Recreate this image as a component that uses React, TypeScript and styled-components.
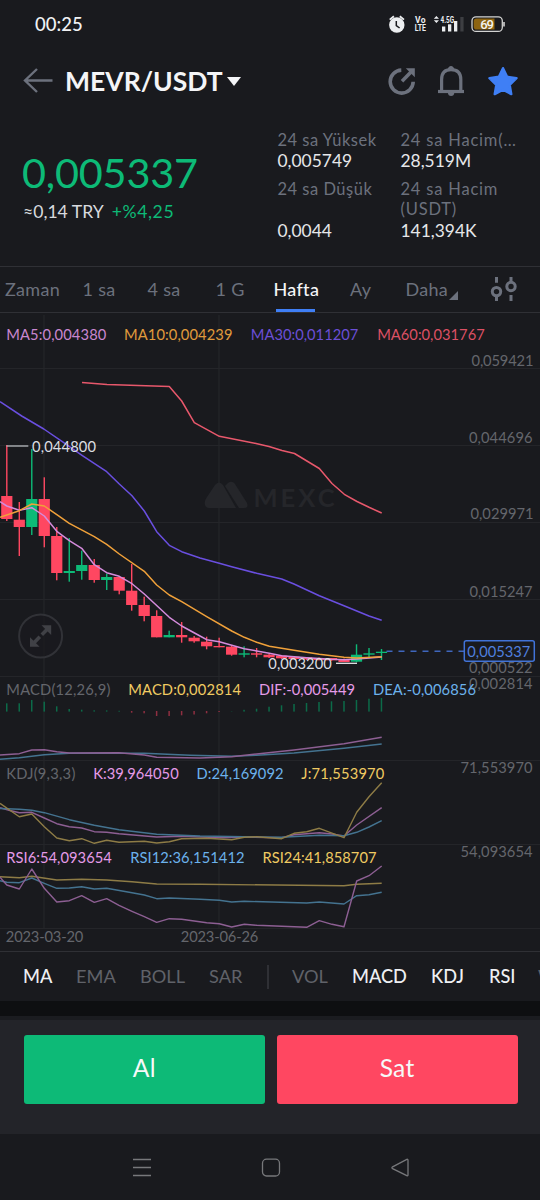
import React from 'react';
import styled, { createGlobalStyle } from 'styled-components';

const color = {
  bg: '#191a1e',
  panel: '#232429',
  line: '#2f3035',
  grid: '#242529',
  muted: '#6c717d',
  dim: '#63656b',
  text: '#e6e7ea',
  green: '#0dba77',
  red: '#ff4761',
  blue: '#3f7ff5',
};

const GlobalStyle = createGlobalStyle`
  * { box-sizing: border-box; }
  body {
    margin: 0;
    background: ${color.bg};
    font-family: Lato, "Open Sans", sans-serif;
    color: ${color.text};
  }
  svg { display: block; }
`;

const Screen = styled.div`
  width: 540px;
  height: 1200px;
  display: flex;
  flex-direction: column;
  overflow: hidden;
  background: ${color.bg};
`;

const StatusBar = styled.div`
  height: 48px;
  flex: none;
  display: flex;
  align-items: center;
  justify-content: space-between;
  padding: 0 34px 0 35px;
`;

const Clock = styled.span`
  font-size: 18.5px;
  font-weight: 500;
  line-height: 22px;
  letter-spacing: 0.05px;
  color: #f1f2f4;
`;

const Header = styled.header`
  height: 66px;
  flex: none;
  display: flex;
  align-items: center;
  padding: 0 21.5px 0 23px;
`;

const Pair = styled.h1`
  margin: 0 0 0 12px;
  font-size: 26.5px;
  font-weight: 700;
  line-height: 32px;
  letter-spacing: 0;
  color: #f4f5f7;
`;

const Caret = styled.span`
  margin-left: 4.5px;
  border: 7px solid transparent;
  border-top: 9px solid #f4f5f7;
  border-bottom: 0;
`;

const Actions = styled.div`
  margin-left: auto;
  display: flex;
  align-items: center;
  gap: 21.5px;
`;

const Quote = styled.section`
  height: 152px;
  flex: none;
  display: flex;
  padding: 16px 0 0 23px;
`;

const PriceColumn = styled.div`
  width: 254.5px;
  padding-top: 17px;
`;

const Price = styled.div`
  font-size: 41.4px;
  line-height: 50px;
  letter-spacing: -0.2px;
  color: ${color.green};
  margin-left: -1px;
`;

const SubPrice = styled.div`
  display: flex;
  gap: 8px;
  margin-top: 4px;
  font-size: 17.6px;
  line-height: 22px;
  color: #d8dade;
`;

const Change = styled.span`
  color: ${color.green};
  letter-spacing: 0.6px;
`;

const Stats = styled.div`
  display: grid;
  grid-template-columns: 123px 122px;
  grid-template-rows: 49px 63px;
`;

const Stat = styled.div`
  display: flex;
  flex-direction: column;
  justify-content: space-between;
  &:nth-child(-n + 2) {
    justify-content: flex-start;
  }
`;

const StatLabel = styled.span<{ $spread?: boolean }>`
  font-size: 16.5px;
  line-height: 20px;
  letter-spacing: ${(p) => (p.$spread ? '0.8px' : '0.5px')};
  color: ${color.muted};
  white-space: nowrap;
`;

const StatValue = styled.span`
  font-size: 17.4px;
  line-height: 22px;
  color: ${color.text};
`;

const Tabs = styled.nav`
  height: 47px;
  flex: none;
  display: grid;
  grid-template-columns: 77.5px 65px 68px 58px 76.5px 55.5px 84px auto;
  align-items: center;
  padding-left: 5px;
  border-top: 1.5px solid ${color.line};
  border-bottom: 1.5px solid ${color.line};
`;

const Tab = styled.span<{ $active?: boolean }>`
  position: relative;
  justify-self: start;
  display: flex;
  align-items: center;
  height: 44px;
  padding-bottom: 2px;
  font-size: 18px;
  letter-spacing: 0.3px;
  color: ${(p) => (p.$active ? '#f4f5f7' : color.muted)};
  font-weight: ${(p) => (p.$active ? 500 : 400)};
`;

const Underline = styled.i`
  position: absolute;
  left: 2.5px;
  bottom: 0;
  width: 39px;
  height: 3px;
  background: ${color.blue};
`;

const Corner = styled.svg`
  margin: 13px 0 0 0.5px;
`;

const ChartArea = styled.div`
  height: 638px;
  flex: none;
`;

const Indicators = styled.div`
  height: 50px;
  flex: none;
  display: grid;
  grid-template-columns: 53px 64px 69px 58px 25px 60px 79px 58px 49px auto;
  align-items: center;
  padding-left: 23px;
  border-top: 1.5px solid ${color.line};
  white-space: nowrap;
  overflow: hidden;
`;

const Indicator = styled.span<{ $on?: boolean }>`
  padding-bottom: 2px;
  font-size: 18.2px;
  line-height: 24px;
  font-weight: ${(p) => (p.$on ? 500 : 400)};
  color: ${(p) => (p.$on ? '#eef0f3' : '#606269')};
`;

const Divider = styled.i`
  width: 1.5px;
  height: 24px;
  background: ${color.line};
`;

const Band = styled.div`
  height: 19px;
  flex: none;
  background: #0e0f11;
  border-bottom: 4px solid #1b1c20;
`;

const TradeBar = styled.div`
  height: 114px;
  flex: none;
  display: flex;
  gap: 12px;
  padding: 15px 22.5px 30px 24px;
  background: ${color.panel};
`;

const TradeButton = styled.button<{ $side: 'buy' | 'sell' }>`
  flex: 1;
  height: 69px;
  padding: 0 0 4px;
  border: 0;
  border-radius: 3px;
  background: ${(p) => (p.$side === 'buy' ? color.green : color.red)};
  color: #f6f8f8;
  font-family: inherit;
  font-size: 24.6px;
  letter-spacing: 0.3px;
`;

const SystemNav = styled.div`
  flex: 1;
  display: flex;
  justify-content: center;
  align-items: center;
  gap: 109px;
  padding: 1px 0 0 1px;
`;

/* ---------- chart data ---------- */

type Candle = [up: 0 | 1, top: number, bottom: number, high: number, low: number];

const candles: Candle[] = [
  [0, 496, 519, 445, 521],
  [0, 519.7, 527, 502, 556],
  [1, 499, 527, 449, 535],
  [0, 499, 536, 477.3, 547.3],
  [0, 536, 573, 527, 580.3],
  [1, 571, 573, 538, 581.7],
  [1, 565, 571, 550.7, 579.7],
  [0, 565, 580, 559, 582.7],
  [1, 577, 580, 573.7, 590],
  [0, 577, 590.7, 576, 594.3],
  [0, 590.7, 605, 564, 610.7],
  [0, 605, 616, 596.7, 621.3],
  [0, 616, 637.3, 610.3, 637.3],
  [1, 635, 637.3, 630.7, 637.3],
  [0, 635, 637.3, 622, 642.7],
  [0, 637.7, 641.3, 636, 642.7],
  [0, 641.7, 646.3, 636.7, 649.3],
  [0, 646, 647.3, 637.7, 647.3],
  [0, 646.7, 654.7, 645.3, 655.7],
  [1, 653.3, 654.7, 646.3, 657.3],
  [0, 653.3, 654.7, 648, 657.3],
  [0, 654.7, 657.3, 654, 658],
  [0, 655.7, 658.3, 655, 659],
  [0, 656.7, 659, 656, 659.5],
  [0, 657.3, 659.3, 657, 660],
  [0, 658, 660, 657.5, 660.5],
  [0, 658, 660.3, 658, 661],
  [0, 659, 662, 658.5, 662],
  [1, 654.7, 661.7, 644.3, 662.3],
  [1, 653.3, 654.7, 648, 657.3],
  [1, 651.7, 653, 649, 660],
];

const candleX = (i: number) => 6.8 + i * 12.49;

const BASE = 711.3;
const histogram = [
  703.3, 703.3, 700, 701.7, 706.3, 709, 709.7, 710.3, 710.4, 710.8, 712.7, 713.3, 716, 716, 715.3,
  714.5, 713.3, 712, 711.3, 709.8, 708.7, 706.7, 705.3, 704, 703, 702, 701.3, 701, 700, 698.7, 698,
];

const priceLines = [
  {
    stroke: '#e8586c',
    points:
      '82,382.5 107,384.4 169.3,386.6 181.7,401 194.3,422.7 219.3,436.3 256,443.5 269,446.5 282,450.5 294.5,453.5 319.3,468.5 332,483.5 344.3,494.3 357,501.5 369,507.3 381.7,513',
  },
  {
    stroke: '#6a4fe0',
    points:
      '0,401.7 21.7,416 43.8,429 62.3,441.7 82,455.3 106.7,471.7 119.3,484 132,495.7 144.3,511 156.7,531.7 169.3,545.3 181.7,551.7 200,558 219.3,563.3 231.7,566.7 256.7,573.3 281.7,579 294,584 319.3,595.7 344,605.7 369,616 381.7,620.3',
  },
  {
    stroke: '#d58bdc',
    points:
      '0,501.7 6.8,506 19.3,510.3 31.8,507.7 44.3,516 56.8,531.3 69.3,540.7 81.7,548.3 94.3,564.7 106.7,572.7 119.3,576.3 132,583.7 144.3,594 169.3,617.3 181.7,626 200,636 206.7,639.7 219.3,641.7 244.3,648.7 269.3,653.3 281.7,655.7 306.7,657.7 331.7,659.3 344,659.7 356.7,659 381.7,657',
  },
  {
    stroke: '#f0a13a',
    points:
      '0,517.3 19.3,510.7 31.8,504 44.3,506 56.8,514.7 69.3,523.3 94.3,536.7 106.7,544.3 119.3,554 144.3,571.3 156.7,585 169.3,595 181.7,601.7 206.7,616.7 231.7,631 244.3,637.3 256.7,642.3 269.3,646.3 294,650.3 319.3,654.3 344,657.3 356.7,658 381.7,656.7',
  },
];

const purple = '#8d5f93';
const steel = '#447390';
const gold = '#8e7c46';

const oscillatorLines = [
  { stroke: steel, points: '0,759.3 19.3,757.7 44.3,754.7 69.3,753.3 144.3,753.3 190,755.3 231.7,756.3 256.7,755.3 294,753 344,748.3 381.7,744' },
  { stroke: purple, points: '0,755 19.3,753.7 31.8,750 44.3,749.7 56.8,751.7 69.3,753 119,752.7 144.3,755 156.7,757.3 200,758 231.7,756.7 256.7,754 294,750 344,743.7 381.7,737.3' },
  { stroke: purple, points: '0,807.7 10,810.5 19.3,812.7 31.8,812.3 44.3,818 56.8,823.7 69.3,826.7 81.7,828 94.3,831.7 106.7,832.3 119,833.7 156.7,837 181.7,836.3 223,837.7 244.3,837 281.7,837.7 294,834.7 319.3,832.7 332,834 344,836 356.7,825 381.7,807.7' },
  { stroke: steel, points: '0,808.5 19.3,809.3 31.8,810.3 44.3,812.7 69.3,819.7 94.3,825.3 119,829.7 156.7,834.3 200,836 244,836.7 281.7,837.3 319.3,835.3 344,835.7 356.7,832.3 369,827 381.7,820.7' },
  { stroke: gold, points: '0,803.3 19.3,816.7 31.8,814 44.3,826.7 56.8,838 69.3,840.7 81.7,838.7 94.3,843.3 106.7,840.3 119,842.3 144.3,841.3 156.7,843 169.3,841.7 181.7,838.7 206.7,838.3 231.7,839.7 244.3,837.3 256.7,836.7 281.7,838.7 294,833.3 306.7,831.7 319.3,828.3 344,837.7 356.7,812.3 369,796.7 381.7,782.7' },
  { stroke: steel, points: '0,880.7 6.8,882.3 19.3,882.7 31.8,878 44.3,883.3 56.8,888.3 69.3,888 81.7,886.7 94.3,889 106.7,888.3 132,892.7 144.3,895 156.7,898.7 169.3,898 200,899.3 219.3,900.3 231.7,902 244.3,901.3 306.7,903 319.3,902 344,904 356.7,895.7 369,894.7 381.7,892.3' },
  { stroke: gold, points: '0,876.7 19.3,877.7 31.8,876.3 56.8,880 81.7,879.3 106.7,880 132,881.7 156.7,884 200,884.3 344,885.7 356.7,884.3 381.7,883.3' },
  { stroke: purple, points: '0,877.3 6.8,885 19.3,889 31.8,869 44.3,888.3 56.8,902 69.3,900.7 81.7,895.7 94.3,902.3 106.7,898.7 119,905.3 132,911.3 144.3,916.7 156.7,922.3 169.3,918.7 181.7,919.3 206.7,922.7 219.3,923.7 231.7,927 244.3,924.3 256.7,925.3 306.7,927.3 319.3,920.7 332,924.3 344,926.7 356.7,881 369,875.7 381.7,866' },
];

type Label = [text: string, x: number, y: number, width: number, fill: string];

const pink = '#e59be8';
const sky = '#6cb2ec';
const yellow = '#f0cb62';
const grey = '#64666c';

const labels: Label[] = [
  ['MA5:0,004380', 6.3, 339.6, 100, '#c987d0'],
  ['MA10:0,004239', 124, 339.6, 108.5, '#e09a3c'],
  ['MA30:0,011207', 250.8, 339.6, 107.5, '#6b4fd6'],
  ['MA60:0,031767', 377.2, 339.6, 107.5, '#dc5064'],
  ['0,059421', 471.5, 366.3, 62, grey],
  ['0,044696', 469, 442.6, 63.5, grey],
  ['0,029971', 470.5, 519.4, 63, grey],
  ['0,015247', 469.5, 596.7, 63, grey],
  ['0,000522', 469, 672.7, 63.5, grey],
  ['0,002814', 469, 689.3, 63.5, grey],
  ['71,553970', 460.5, 773.3, 72, grey],
  ['54,093654', 460.5, 857.3, 72, grey],
  ['MACD(12,26,9)', 6.3, 695.3, 104, grey],
  ['MACD:0,002814', 128.3, 695.3, 112.7, yellow],
  ['DIF:-0,005449', 259, 695.3, 96, pink],
  ['DEA:-0,006856', 373, 695.3, 103, sky],
  ['KDJ(9,3,3)', 6.3, 779.3, 69, grey],
  ['K:39,964050', 93.2, 779.3, 85.5, pink],
  ['D:24,169092', 196.5, 779.3, 87, sky],
  ['J:71,553970', 301.3, 779.3, 83, yellow],
  ['RSI6:54,093654', 6.3, 863.3, 105.5, pink],
  ['RSI12:36,151412', 130.2, 863.3, 114.3, sky],
  ['RSI24:41,858707', 262.5, 863.3, 114, yellow],
  ['2023-03-20', 5.8, 942, 77.5, grey],
  ['2023-06-26', 180.8, 942, 77.5, grey],
  ['0,044800', 32, 451.6, 64, '#dcdee2'],
  ['0,003200', 268.3, 668.7, 63.5, '#dcdee2'],
];

const ChartText = ({ label: [text, x, y, width, fill] }: { label: Label }) => (
  <text x={x} y={y} fill={fill} fontSize="14.7" textLength={width}>
    {text}
  </text>
);

const Chart = () => (
  <svg width="540" height="638" viewBox="0 313 540 638">
    <g stroke={color.grid} strokeWidth="1">
      {[44, 219].map((x) => (
        <line key={x} x1={x} x2={x} y1="315" y2="928" strokeWidth="1.3" />
      ))}
      {[368.5, 445.5, 522.5, 599.5, 676.5, 760.5, 844.5, 928.5].map((y) => (
        <line key={y} x1="0" x2="540" y1={y} y2={y} />
      ))}
    </g>

    <g fill="#25262a">
      <path d="M205 505 Q204 501 207 497 L215 485 Q219 480 223 485 L236 508 L209 508 Q206 508 205 505Z" />
      <path d="M225 486 L228 483 Q232 480 235 484 L247 503 Q249 508 244 508 L239 508Z" />
      <text x="253.5" y="506.7" fontSize="25.5" fontWeight="700" textLength="81">
        MEXC
      </text>
    </g>

    <g>
      {histogram.map((v, i) => {
        const up = v <= BASE;
        return (
          <rect
            key={i}
            x={candleX(i) - 0.8}
            width="1.5"
            y={up ? v : BASE - 0.3}
            height={Math.abs(v - BASE) + 0.3}
            fill={up ? '#0c6b49' : '#8f2f41'}
          />
        );
      })}
    </g>

    <g>
      {candles.map(([up, top, bottom, high, low], i) => (
        <g key={i} fill={up ? color.green : color.red}>
          <rect x={candleX(i) - 0.7} width="1.4" y={high} height={low - high} />
          <rect x={candleX(i) - 5.6} width="11.2" y={top} height={bottom - top} />
        </g>
      ))}
    </g>

    <g fill="none" strokeWidth="1.5" strokeLinejoin="round">
      {priceLines.map((l) => (
        <polyline key={l.stroke} points={l.points} stroke={l.stroke} />
      ))}
    </g>
    <g fill="none" strokeWidth="1.4" strokeLinejoin="round">
      {oscillatorLines.map((l, i) => (
        <polyline key={i} points={l.points} stroke={l.stroke} />
      ))}
    </g>

    <g stroke="#b9bbc0" strokeWidth="1.3">
      <line x1="6.5" x2="28.3" y1="446" y2="446" />
      <line x1="336" x2="357" y1="663.3" y2="663.3" stroke="#e6e7ea" />
    </g>
    <line x1="386.5" x2="464" y1="651.3" y2="651.3" stroke="#3f66bd" strokeWidth="1.5" strokeDasharray="6 6" />

    {labels.map((label) => (
      <ChartText key={label[0] + label[1]} label={label} />
    ))}

    <rect x="464.3" y="640.7" width="70" height="20.6" rx="2" fill={color.bg} stroke="#4173d8" strokeWidth="1.5" />
    <ChartText label={['0,005337', 467.3, 656.6, 63, '#4f7fdf']} />

    <g>
      <circle cx="40.6" cy="636" r="21.5" fill="#191a1e" fillOpacity=".7" stroke="#313237" strokeWidth="2" />
      <g fill="#404146">
        <path d="M41.5 625.3h9.7v9.7z" />
        <path d="M30 637.2v9.6h9.6z" />
      </g>
      <path d="M48 628.5 L41.8 634.7 M39.8 636.8 L33.5 643.3" stroke="#404146" strokeWidth="3.6" />
    </g>
  </svg>
);

/* ---------- icons ---------- */

const StatusIcons = () => (
  <svg width="118" height="20" viewBox="388 14 118 20" fontFamily="Roboto, sans-serif">
    <g fill="#eceef0">
      <circle cx="396.8" cy="25" r="7.7" />
      <path d="M396.3 21v4.6l3.3 2.4" fill="none" stroke={color.bg} strokeWidth="1.5" />
      <path d="M389.7 19.6l4.2-3.3M404 19.6l-4.2-3.3" stroke="#eceef0" strokeWidth="1.8" />
      <text x="415" y="23.2" fontSize="8.5" fontWeight="700" textLength="10.5">
        Vo
      </text>
      <text x="414.7" y="31.4" fontSize="9" fontWeight="700" textLength="11.3" lengthAdjust="spacingAndGlyphs">
        LTE
      </text>
      <path d="M433.8 18.8l2.6-2.8 2.6 2.8zM433.8 20.3h5.2l-2.6 2.8z" />
      <text x="440.5" y="23" fontSize="8.8" fontWeight="700" textLength="13.5" lengthAdjust="spacingAndGlyphs">
        4.5G
      </text>
      <rect x="442" y="26.5" width="3.3" height="5" />
      <rect x="448" y="24.3" width="3.3" height="7.2" />
      <rect x="454" y="21" width="3.3" height="10.5" />
      <rect x="460.3" y="17" width="3.3" height="14.5" fill="#3d3e42" />
    </g>
    <rect x="472" y="16.8" width="30.3" height="14.6" rx="4" fill="none" stroke="#d3d3d2" strokeWidth="1.3" />
    <path d="M476.5 18.6h18v11h-18q-2.8 0-2.8-2.8v-5.4q0-2.8 2.8-2.8z" fill="#8d6411" />
    <path d="M504 22v4.4" stroke="#d3d3d2" strokeWidth="1.6" />
    <text x="480.3" y="28.8" fontSize="13" fontWeight="500" fill="#f4f4f2" textLength="13.5">
      69
    </text>
  </svg>
);

const BackIcon = () => (
  <svg width="30" height="26" viewBox="23 68 30 26">
    <path d="M52.5 80.5H25M37 69L25 80.5L37 92" fill="none" stroke={color.muted} strokeWidth="2.4" />
  </svg>
);

const ShareIcon = () => (
  <svg width="28" height="30" viewBox="388 66 28 30">
    <path d="M401.3 70.1A11.5 11.5 0 1 0 413.2 81.8" fill="none" stroke={color.muted} strokeWidth="3.6" />
    <path d="M402 81.2L411 72" stroke={color.muted} strokeWidth="3.6" />
    <path d="M405.8 68.3h9v9z" fill={color.muted} />
  </svg>
);

const BellIcon = () => (
  <svg width="28" height="32" viewBox="437 65 28 32">
    <g fill="none" stroke={color.muted} strokeWidth="3.2">
      <path d="M441.6 91V79.5Q441.6 69.6 451 69.6Q460.8 69.6 460.8 79.5V91" />
      <path d="M438 91.5h26" />
    </g>
    <path d="M447.5 69.5Q448.5 66 451 66Q453.5 66 454.5 69.5zM447.8 92.5h6.6Q454 96 451.1 96Q448.2 96 447.8 92.5z" fill={color.muted} />
  </svg>
);

const StarIcon = () => (
  <svg width="32" height="32" viewBox="486.5 65 32 32">
    <path
      d="M502.5 68.2l4.1 8.6 9.4 1.4-6.8 6.7 1.6 9.2-8.3-4.4-8.3 4.4 1.6-9.2-6.8-6.7 9.4-1.4z"
      fill={color.blue}
      stroke={color.blue}
      strokeWidth="2.4"
      strokeLinejoin="round"
    />
  </svg>
);

const SettingsIcon = () => (
  <svg width="28" height="28" viewBox="490 276 28 28">
    <g fill="none" stroke={color.muted} strokeWidth="3">
      <circle cx="496.5" cy="291.6" r="4.2" />
      <path d="M496.5 277v5.8M496.5 296v5" />
      <circle cx="511" cy="286.5" r="4.2" />
      <path d="M511 277v5M511 295v6" />
    </g>
  </svg>
);

const MenuIcon = () => (
  <svg width="20" height="20" viewBox="0 0 20 20">
    <path d="M1 1.5h18M1 9.5h18M1 17.5h18" stroke="#77787b" strokeWidth="1.4" />
  </svg>
);

const HomeIcon = () => (
  <svg width="20" height="20" viewBox="0 0 20 20">
    <rect x="1.5" y="1.2" width="17" height="16.8" rx="4" fill="none" stroke="#77787b" strokeWidth="1.3" />
  </svg>
);

const PreviousIcon = () => (
  <svg width="20" height="20" viewBox="0 0 20 20">
    <path d="M18 2.4V17q0 1.2-1.2.6L2.6 10.6q-1.4-.9 0-1.8L16.8 1.4q1.2-.5 1.2 1z" fill="none" stroke="#77787b" strokeWidth="1.3" />
  </svg>
);

export default function App() {
  return (
    <>
      <GlobalStyle />
      <Screen>
        <StatusBar>
          <Clock>00:25</Clock>
          <StatusIcons />
        </StatusBar>

        <Header>
          <BackIcon />
          <Pair>MEVR/USDT</Pair>
          <Caret />
          <Actions>
            <ShareIcon />
            <BellIcon />
            <StarIcon />
          </Actions>
        </Header>

        <Quote>
          <PriceColumn>
            <Price>0,005337</Price>
            <SubPrice>
              <span>≈0,14 TRY</span>
              <Change>+%4,25</Change>
            </SubPrice>
          </PriceColumn>
          <Stats>
            <Stat>
              <StatLabel>24 sa Yüksek</StatLabel>
              <StatValue>0,005749</StatValue>
            </Stat>
            <Stat>
              <StatLabel $spread>24 sa Hacim(…</StatLabel>
              <StatValue>28,519M</StatValue>
            </Stat>
            <Stat>
              <StatLabel>24 sa Düşük</StatLabel>
              <StatValue>0,0044</StatValue>
            </Stat>
            <Stat>
              <StatLabel $spread>
                24 sa Hacim
                <br />
                (USDT)
              </StatLabel>
              <StatValue>141,394K</StatValue>
            </Stat>
          </Stats>
        </Quote>

        <Tabs>
          <Tab>Zaman</Tab>
          <Tab>1 sa</Tab>
          <Tab>4 sa</Tab>
          <Tab>1 G</Tab>
          <Tab $active>
            Hafta
            <Underline />
          </Tab>
          <Tab>Ay</Tab>
          <Tab>
            Daha
            <Corner width="9" height="9">
              <path d="M9 0V9H0z" fill={color.muted} />
            </Corner>
          </Tab>
          <SettingsIcon />
        </Tabs>

        <ChartArea>
          <Chart />
        </ChartArea>

        <Indicators>
          <Indicator $on>MA</Indicator>
          <Indicator>EMA</Indicator>
          <Indicator>BOLL</Indicator>
          <Indicator>SAR</Indicator>
          <Divider />
          <Indicator>VOL</Indicator>
          <Indicator $on>MACD</Indicator>
          <Indicator $on>KDJ</Indicator>
          <Indicator $on>RSI</Indicator>
          <Indicator>WR</Indicator>
        </Indicators>

        <Band />

        <TradeBar>
          <TradeButton $side="buy">Al</TradeButton>
          <TradeButton $side="sell">Sat</TradeButton>
        </TradeBar>

        <SystemNav>
          <MenuIcon />
          <HomeIcon />
          <PreviousIcon />
        </SystemNav>
      </Screen>
    </>
  );
}
